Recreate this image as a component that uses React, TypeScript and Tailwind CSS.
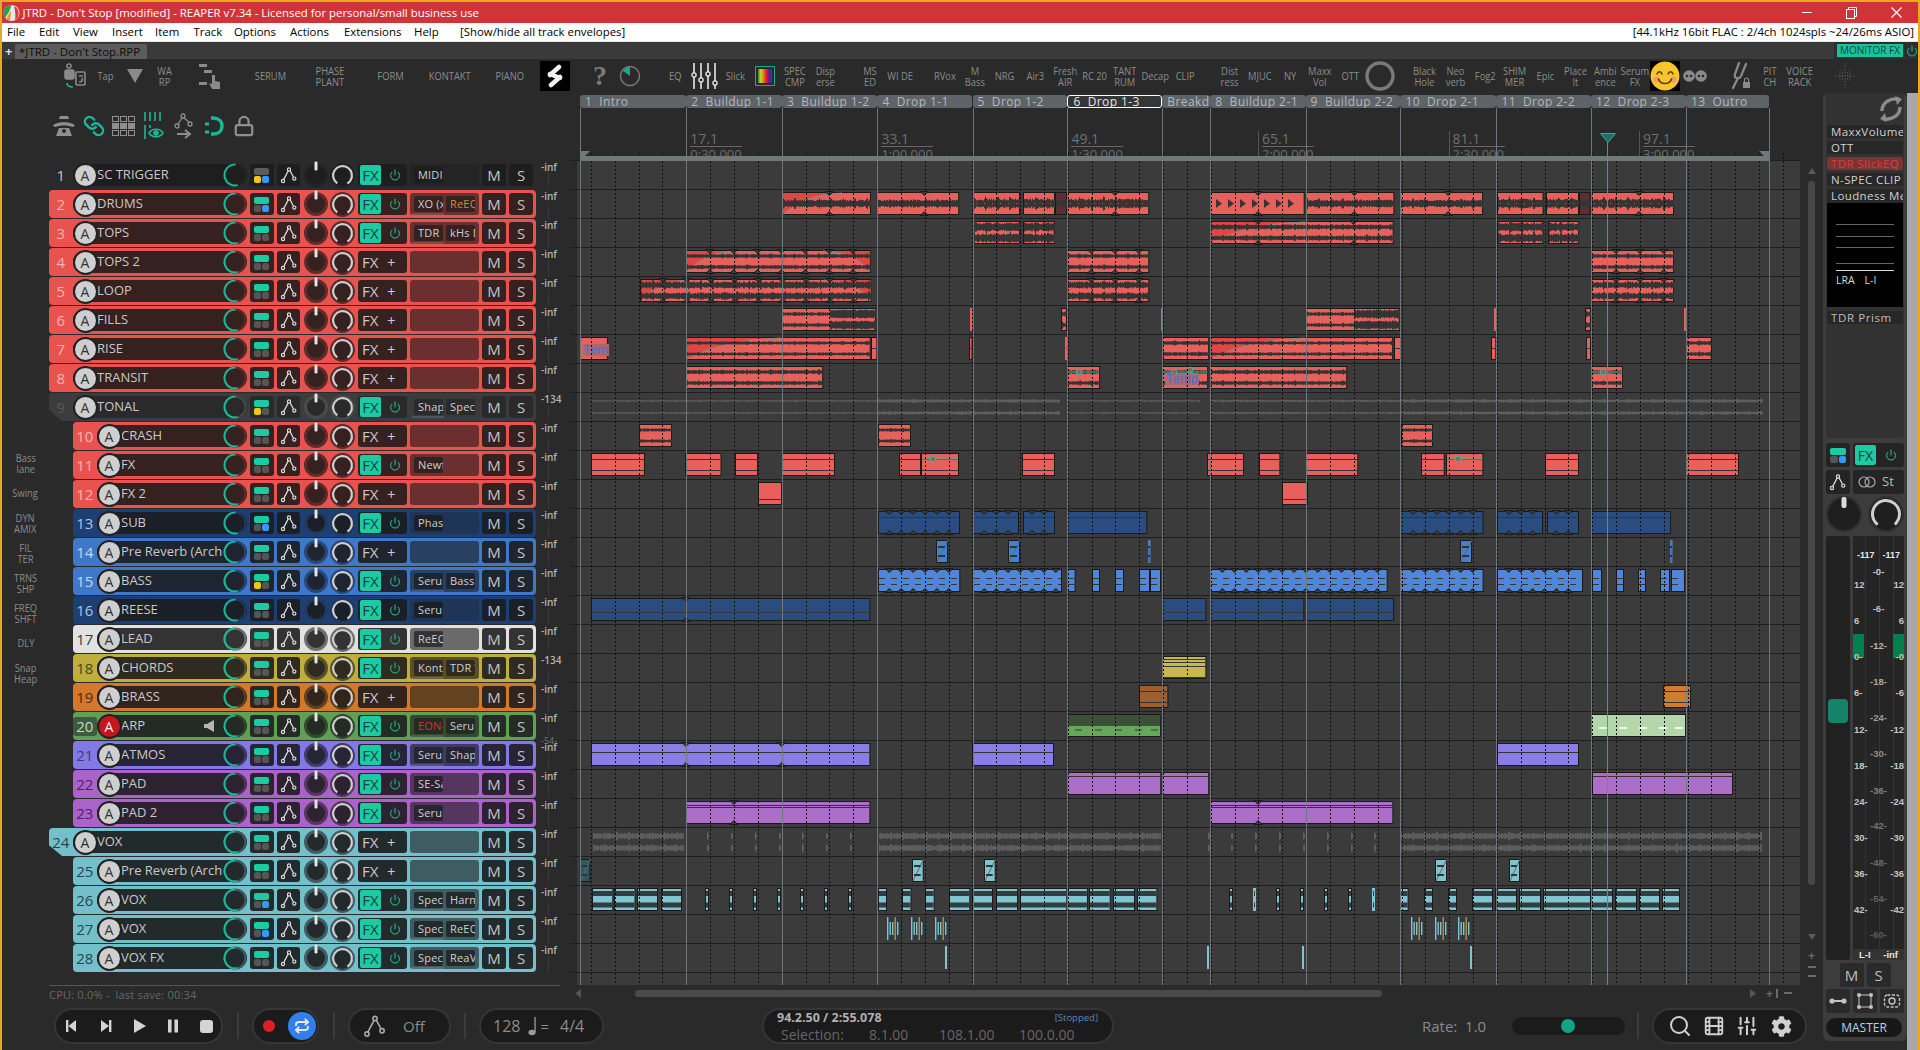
import React from "react";
import { Film, Link, Lock, Power, Repeat, Search, SlidersVertical } from "lucide-react";
import { FaCog } from "react-icons/fa";

type Theme = {
  body: string;
  inner: string;
  ins: string;
  num: string;
  innerHex: string;
  ringHex: string;
};

const themes: Record<string, Theme> = {
  none: { body: "", inner: "bg-[#1e1e1e]", ins: "bg-[#242424]", num: "text-[#c8c8c8]", innerHex: "#1e1e1e", ringHex: "#222222" },
  gray: { body: "bg-[#3c3c3c]", inner: "bg-[#2a2a2a]", ins: "bg-[#3a3a3a]", num: "text-[#5a5a5a]", innerHex: "#2a2a2a", ringHex: "#4a4a4a" },
  red: { body: "bg-[#e8534f]", inner: "bg-[#352120]", ins: "bg-[#6b2f2f]", num: "text-[#f5b5b2]", innerHex: "#352120", ringHex: "#5e2a2a" },
  navy: { body: "bg-[#1d3f72]", inner: "bg-[#1b2028]", ins: "bg-[#1f3558]", num: "text-[#a8c4ea]", innerHex: "#1b2028", ringHex: "#1f3a63" },
  blue: { body: "bg-[#3f78c8]", inner: "bg-[#1e2530]", ins: "bg-[#2a4063]", num: "text-[#c4d8f4]", innerHex: "#1e2530", ringHex: "#28487a" },
  white: { body: "bg-[#e2e2e2]", inner: "bg-[#333333]", ins: "bg-[#6a6a6a]", num: "text-[#3a3a3a]", innerHex: "#333333", ringHex: "#707070" },
  yellow: { body: "bg-[#bfae3d]", inner: "bg-[#2f2b20]", ins: "bg-[#584f25]", num: "text-[#4a4420]", innerHex: "#2f2b20", ringHex: "#5c5228" },
  orange: { body: "bg-[#d4782c]", inner: "bg-[#30241c]", ins: "bg-[#62421f]", num: "text-[#4a2c10]", innerHex: "#30241c", ringHex: "#60401f" },
  green: { body: "bg-[#5fa055]", inner: "bg-[#242b24]", ins: "bg-[#33492c]", num: "text-[#c8d8c0]", innerHex: "#242b24", ringHex: "#33492c" },
  violet: { body: "bg-[#8279e4]", inner: "bg-[#272535]", ins: "bg-[#3f3a64]", num: "text-[#3e3a78]", innerHex: "#272535", ringHex: "#403b68" },
  purple: { body: "bg-[#ac63c9]", inner: "bg-[#2c2230]", ins: "bg-[#55365e]", num: "text-[#4a2360]", innerHex: "#2c2230", ringHex: "#55365e" },
  teal: { body: "bg-[#73bfca]", inner: "bg-[#232a2c]", ins: "bg-[#3f5c62]", num: "text-[#264550]", innerHex: "#232a2c", ringHex: "#3f5c62" },
};

type Track = {
  n: number;
  name: string;
  theme: string;
  indent?: boolean;
  folder?: boolean;
  ins?: string[];
  bl?: string;
  br?: string;
  db?: string;
};

const tracks: Track[] = [
  { n: 1, name: "SC TRIGGER", theme: "none", ins: ["MIDI"], bl: "bg-[#f5c518]", br: "bg-[#3399ff]" },
  { n: 2, name: "DRUMS", theme: "red", ins: ["XO (x64)", "ReEQ"], br: "bg-[#3399ff]" },
  { n: 3, name: "TOPS", theme: "red", ins: ["TDR Nova", "kHs Dyn"] },
  { n: 4, name: "TOPS 2", theme: "red" },
  { n: 5, name: "LOOP", theme: "red" },
  { n: 6, name: "FILLS", theme: "red" },
  { n: 7, name: "RISE", theme: "red" },
  { n: 8, name: "TRANSIT", theme: "red" },
  { n: 9, name: "TONAL", theme: "gray", folder: true, ins: ["Shaper", "Spectral"], bl: "bg-[#f5c518]", db: "-134" },
  { n: 10, name: "CRASH", theme: "red", indent: true },
  { n: 11, name: "FX", theme: "red", indent: true, ins: ["Newfangled"] },
  { n: 12, name: "FX 2", theme: "red", indent: true },
  { n: 13, name: "SUB", theme: "navy", indent: true, ins: ["Phase"], br: "bg-[#3399ff]" },
  { n: 14, name: "Pre Reverb (Archive)", theme: "blue", indent: true },
  { n: 15, name: "BASS", theme: "blue", indent: true, ins: ["Serum", "Bassline"], bl: "bg-[#f5c518]" },
  { n: 16, name: "REESE", theme: "navy", indent: true, ins: ["Serum"] },
  { n: 17, name: "LEAD", theme: "white", indent: true, ins: ["ReEQ"] },
  { n: 18, name: "CHORDS", theme: "yellow", indent: true, ins: ["Kontakt", "TDR V"], db: "-134" },
  { n: 19, name: "BRASS", theme: "orange", indent: true },
  { n: 20, name: "ARP", theme: "green", indent: true, ins: ["EON-X", "Serum"] },
  { n: 21, name: "ATMOS", theme: "violet", indent: true, ins: ["Serum", "Shaper"] },
  { n: 22, name: "PAD", theme: "purple", indent: true, ins: ["SE-Sat"] },
  { n: 23, name: "PAD 2", theme: "purple", indent: true, ins: ["Serum"] },
  { n: 24, name: "VOX", theme: "teal", folder: true },
  { n: 25, name: "Pre Reverb (Archive)", theme: "teal", indent: true },
  { n: 26, name: "VOX", theme: "teal", indent: true, ins: ["Spectral", "Harmony"], br: "bg-[#3399ff]" },
  { n: 27, name: "VOX", theme: "teal", indent: true, ins: ["Spectral", "ReEQ"], br: "bg-[#3399ff]" },
  { n: 28, name: "VOX FX", theme: "teal", indent: true, ins: ["Spectral", "ReaVerb"] },
];

const EnvIcon = ({ size = 18, color = "#dddddd" }: { size?: number; color?: string }) => (
  <svg width={size} height={size} viewBox="0 0 18 18" fill="none" stroke={color} strokeWidth="1.2">
    <path d="M3.6 13.6 L8.4 4.6 M10 4.6 L13.4 11" />
    <circle cx="3" cy="15" r="1.6" />
    <circle cx="9" cy="3.4" r="1.6" />
    <circle cx="14.3" cy="12.6" r="1.6" />
  </svg>
);

const RecArc = ({ ring }: { ring: string }) => (
  <svg width="24" height="24" viewBox="0 0 24 24" fill="none" className="shrink-0">
    <circle cx="12" cy="12" r="10.5" stroke={ring} strokeWidth="2" />
    <circle cx="12" cy="12" r="10.5" stroke="#19b897" strokeWidth="2" strokeDasharray="36 30" transform="rotate(75 12 12)" />
  </svg>
);

const VolKnob = ({ ring, inner }: { ring: string; inner: string }) => (
  <svg width="24" height="24" viewBox="0 0 24 24" className="overflow-visible shrink-0">
    <circle cx="12" cy="12" r="10.5" fill={inner} stroke={ring} strokeWidth="3" />
    <rect x="10.5" y="-1.5" width="3" height="9" rx="1.2" fill="#e4e4e4" />
  </svg>
);

const PanKnob = ({ ring, inner }: { ring: string; inner: string }) => (
  <svg width="25" height="25" viewBox="0 0 25 25" fill="none" className="shrink-0">
    <circle cx="12.5" cy="12.5" r="11.5" fill={inner} stroke={ring} strokeWidth="2" />
    <circle cx="12.5" cy="12.5" r="9.4" stroke="#cfcfcf" strokeWidth="2.2" strokeDasharray="48 11" transform="rotate(124 12.5 12.5)" />
  </svg>
);

const TrackRow = ({ t }: { t: Track }) => {
  const th = themes[t.theme];
  const on = !!t.ins;
  const arm = t.n === 20;
  return (
    <div className="flex h-[29px] shrink-0">
      <div
        className={`flex h-[28px] shrink-0 items-center rounded-[4px] pr-[3px] ${th.body} ${t.indent ? "ml-[24px] w-[463px]" : "w-[487px]"} ${t.folder ? "[clip-path:polygon(0_0,100%_0,100%_100%,13px_100%,0_62%)]" : ""}`}
      >
        <div className={`w-[23.5px] shrink-0 text-center text-[15px] leading-none ${arm ? "rounded-[3px] bg-[#3d5c3d] py-[2px]" : ""} ${th.num}`}>{t.n}</div>
        <div className={`flex h-[22px] min-w-0 flex-1 items-center rounded-full ${th.inner}`}>
          <div className={`relative z-10 flex h-[25px] w-[25px] shrink-0 items-center justify-center rounded-full border-[2.5px] border-[#222] text-[14px] ${arm ? "bg-[#c8141c] text-[#f0f0f0]" : "bg-[#cfcfcf] text-[#333]"}`}>A</div>
          <div className="ml-[-0.5px] min-w-0 flex-1 overflow-hidden whitespace-nowrap text-[13px] text-[#c9c9c9]">{t.name}</div>
          {arm && (
            <svg width="12" height="12" viewBox="0 0 12 12" className="mr-[7px] shrink-0">
              <path d="M0 4 H3 L10 0 V12 L3 8 H0 Z" fill="#b5b5b5" />
            </svg>
          )}
          <RecArc ring={th.ringHex} />
        </div>
        <div className={`ml-[3px] flex h-[22px] w-[23.5px] shrink-0 flex-col items-center justify-center gap-[1px] rounded-[3px] ${th.inner}`}>
          <div className={`h-[7px] w-[15px] rounded-[2px] ${t.theme === "none" ? "bg-[#5c5c5c]" : "bg-[#1ccba4]"}`} />
          <div className="flex gap-[1px]">
            <div className={`h-[7px] w-[7px] rounded-[2px] ${t.bl ?? "bg-[#555]"}`} />
            <div className={`h-[7px] w-[7px] rounded-[2px] ${t.br ?? "bg-[#555]"}`} />
          </div>
        </div>
        <div className={`ml-[3.5px] flex h-[22px] w-[23px] shrink-0 items-center justify-center rounded-[3px] ${th.inner}`}>
          <EnvIcon />
        </div>
        <div className="ml-[4px] shrink-0">
          <VolKnob ring={th.ringHex} inner={th.innerHex} />
        </div>
        <div className="ml-[2px] shrink-0">
          <PanKnob ring={th.ringHex} inner={th.innerHex} />
        </div>
        <div className={`ml-[3px] flex h-[22px] w-[49px] shrink-0 items-center rounded-[3px] ${th.inner}`}>
          {on ? (
            <>
              <div className="ml-[2px] flex h-[20px] w-[21px] items-center justify-center rounded-[2px] bg-[#1ccba4] text-[15px] text-[#16423a]">FX</div>
              <Power size={12} strokeWidth={2} className="ml-[8px] text-[#1ccba4]" />
            </>
          ) : (
            <>
              <div className="ml-[4px] w-[19px] text-[15px] text-[#c9c9c9]">FX</div>
              <div className="ml-[6px] text-[15px] text-[#c9c9c9]">+</div>
            </>
          )}
        </div>
        <div className={`relative ml-[3px] flex h-[22px] w-[69px] shrink-0 items-center gap-[3px] overflow-hidden rounded-[3px] pl-[4px] ${th.ins}`}>
          {t.ins?.map((name) => (
            <div
              key={name}
              className={`h-[16px] w-[29px] shrink-0 overflow-hidden whitespace-nowrap rounded-[2px] pl-[4px] text-[11px] leading-[16px] tracking-[0.2px] ${th.inner} ${name === "ReEQ" && t.n === 2 ? "text-[#d68a3c]" : name.startsWith("EON") ? "text-[#d8322e]" : "text-[#cfcfcf]"}`}
            >
              {name}
            </div>
          ))}
          {t.ins && t.ins.length > 1 && <div className="absolute bottom-0 left-[2px] h-[2px] w-[32px] bg-[#ffffff22]" />}
        </div>
        <div className={`ml-[3px] flex h-[22px] w-[24px] shrink-0 items-center justify-center rounded-[3px] text-[15px] text-[#c4c4c4] ${th.inner}`}>M</div>
        <div className={`ml-[3px] flex h-[22px] w-[24px] shrink-0 items-center justify-center rounded-[3px] text-[15px] text-[#c4c4c4] ${th.inner}`}>S</div>
      </div>
      <div className="relative ml-[5px] w-[28px] shrink-0">
        <div className="text-[10px] leading-[12px] font-semibold text-[#b4b4b4]">{t.db ?? "-inf"}</div>
        <div className="absolute top-[12px] bottom-0 left-[7px] w-px bg-[#383838]" />
        {t.n === 20 && <div className="absolute bottom-[-5px] left-[0px] bg-[#2a2a2a] text-[9px] leading-[10px] text-[#777]">-54-</div>}
      </div>
    </div>
  );
};

/* arrange view */
const X0 = 570;
const Y0 = 93;
const GRID = 23.84;
const regionEdges = [580, 686.3, 782, 877.4, 972.5, 1067.4, 1162.3, 1210.3, 1305.6, 1400.4, 1496.4, 1591, 1686, 1769];
const regions = [
  "1  Intro",
  "2  Buildup 1-1",
  "3  Buildup 1-2",
  "4  Drop 1-1",
  "5  Drop 1-2",
  "6  Drop 1-3",
  "Breakdown",
  "8  Buildup 2-1",
  "9  Buildup 2-2",
  "10  Drop 2-1",
  "11  Drop 2-2",
  "12  Drop 2-3",
  "13  Outro",
];
const marks = [
  { x: 686.3, bar: "17.1", time: "0:30.000" },
  { x: 877.4, bar: "33.1", time: "1:00.000" },
  { x: 1067.4, bar: "49.1", time: "1:30.000" },
  { x: 1258, bar: "65.1", time: "2:00.000" },
  { x: 1448.5, bar: "81.1", time: "2:30.000" },
  { x: 1639, bar: "97.1", time: "3:00.000" },
];

type Clip = {
  r: number;
  a: number;
  b: number;
  w?: string;
  n?: number[];
  ns?: number;
  fi?: number;
  fo?: number;
  col?: string;
  lines?: number[];
  amp?: number;
  swell?: number;
  env?: boolean;
  label?: string;
  dash?: boolean;
};

const rowCol: Record<number, string> = {
  13: "#2b4c7e",
  14: "#4480d2",
  15: "#4f86d8",
  16: "#2b4c7e",
  18: "#c8b84f",
  19: "#9c5f30",
  20: "#65a85a",
  21: "#8a7de6",
  22: "#ab6ec9",
  23: "#ab6ec9",
  25: "#7fc4cf",
  26: "#7fc4cf",
  27: "#7fc4cf",
  28: "#7fc4cf",
};

const clips: Clip[] = [
  // drums
  { r: 2, a: 782, b: 871, w: "m", n: [829.3], fi: 60 },
  { r: 2, a: 877.4, b: 959.7, w: "m", n: [924.7] },
  { r: 2, a: 973, b: 1020, w: "d" },
  { r: 2, a: 1023, b: 1055, w: "d" },
  { r: 2, a: 1055, b: 1067, w: "m", col: "#5a2f2f" },
  { r: 2, a: 1067.4, b: 1149.7, w: "d", n: [1115.4] },
  { r: 2, a: 1210.3, b: 1305, w: "a", n: [1258.4] },
  { r: 2, a: 1305.6, b: 1394, w: "m", n: [1353.8] },
  { r: 2, a: 1400.4, b: 1483.5, w: "m", n: [1448.5] },
  { r: 2, a: 1496.5, b: 1543, w: "d" },
  { r: 2, a: 1546, b: 1579, w: "d" },
  { r: 2, a: 1579, b: 1590.5, w: "m", col: "#5a2f2f" },
  { r: 2, a: 1591, b: 1674, w: "d", n: [1639] },
  // tops
  { r: 3, a: 973, b: 1020, w: "s", amp: 4.5 },
  { r: 3, a: 1023, b: 1054.6, w: "s", amp: 4.5 },
  { r: 3, a: 1210.3, b: 1394, w: "s", n: [1258.4, 1353.8], fi: 95, amp: 2.5 },
  { r: 3, a: 1496.5, b: 1543, w: "s", amp: 4.5 },
  { r: 3, a: 1548, b: 1579, w: "s", amp: 4.5 },
  // tops 2, loop
  { r: 4, a: 686.3, b: 871, w: "s", ns: GRID, fi: 48, fo: 48, amp: 2 },
  { r: 4, a: 1067.4, b: 1149.7, w: "s", ns: GRID, amp: 2 },
  { r: 4, a: 1591, b: 1674, w: "s", ns: GRID, amp: 2 },
  { r: 5, a: 639.5, b: 871, w: "s", ns: GRID, fi: 48, fo: 48, amp: 3.5 },
  { r: 5, a: 1067.4, b: 1149.7, w: "s", ns: GRID, amp: 3.5 },
  { r: 5, a: 1591, b: 1674, w: "s", ns: GRID, amp: 3.5 },
  // fills
  { r: 6, a: 782, b: 876, w: "s", swell: 47, amp: 1.8 },
  { r: 6, a: 970, b: 972.5, col: "#e8605c" },
  { r: 6, a: 1061, b: 1067, w: "s" },
  { r: 6, a: 1160.5, b: 1162.3, col: "#e8605c" },
  { r: 6, a: 1305.6, b: 1399.5, w: "s", swell: 47, amp: 1.8 },
  { r: 6, a: 1493.6, b: 1496.3, col: "#e8605c" },
  { r: 6, a: 1585, b: 1591, w: "s" },
  { r: 6, a: 1684, b: 1686, col: "#e8605c" },
  // rise
  { r: 7, a: 579.6, b: 607.5, label: "Tem" },
  { r: 7, a: 686.3, b: 871, w: "s", fi: 95, amp: 1.6 },
  { r: 7, a: 871, b: 877.4, w: "l" },
  { r: 7, a: 969, b: 972.5, w: "l" },
  { r: 7, a: 1064.5, b: 1067.4, w: "l" },
  { r: 7, a: 1162.3, b: 1209.5, w: "s", amp: 2 },
  { r: 7, a: 1210.3, b: 1393.5, w: "s", fi: 95, amp: 1.6 },
  { r: 7, a: 1394, b: 1401, w: "l" },
  { r: 7, a: 1491, b: 1496.3, w: "l" },
  { r: 7, a: 1586, b: 1591, w: "l" },
  { r: 7, a: 1686, b: 1712, w: "s", amp: 2 },
  // transit
  { r: 8, a: 686.3, b: 823.5, w: "s", amp: 2 },
  { r: 8, a: 1067.4, b: 1100.5, w: "s", env: true, amp: 2 },
  { r: 8, a: 1162.3, b: 1208.5, w: "s", env: true, label: "Tempo", amp: 2 },
  { r: 8, a: 1210.3, b: 1347.5, w: "s", amp: 2 },
  { r: 8, a: 1591, b: 1623, w: "s", env: true, amp: 2 },
  // tonal ghost
  { r: 9, a: 591, b: 877, w: "g", amp: 0.8 },
  { r: 9, a: 877, b: 1060, w: "g", amp: 1.6 },
  { r: 9, a: 1067, b: 1200, w: "g", amp: 0.8 },
  { r: 9, a: 1210, b: 1400, w: "g", amp: 1 },
  { r: 9, a: 1400, b: 1763, w: "g", amp: 1.6 },
  // crash
  { r: 10, a: 639.3, b: 672.3, w: "s", amp: 1.6 },
  { r: 10, a: 877.7, b: 910.7, w: "s", amp: 1.6 },
  { r: 10, a: 1401, b: 1433, w: "s", amp: 1.6 },
  // fx
  ...[
    [591, 645],
    [684.5, 721],
    [735, 758],
    [782, 835],
    [899, 921],
    [921, 959],
    [1022, 1055],
    [1207.3, 1244.3],
    [1258.6, 1280],
    [1305.7, 1358],
    [1421.3, 1445],
    [1445.6, 1483],
    [1545, 1579],
    [1686, 1739],
  ].map(([a, b]) => ({ r: 11, a, b, w: "l", lines: [6, 17], env: a === 921 || a === 1445.6 })),
  { r: 12, a: 758, b: 782, w: "l", lines: [17] },
  { r: 12, a: 1281.7, b: 1307.7, w: "l", lines: [17] },
  // sub
  { r: 13, a: 877.7, b: 959.7, w: "l", lines: [6], ns: GRID / 2 },
  { r: 13, a: 973, b: 1019, w: "l", lines: [6], ns: GRID / 2 },
  { r: 13, a: 1023, b: 1055, w: "l", lines: [6], ns: GRID / 2 },
  { r: 13, a: 1067.4, b: 1147.7, w: "l", lines: [6] },
  { r: 13, a: 1400.4, b: 1484, w: "l", lines: [6], ns: GRID / 2 },
  { r: 13, a: 1497, b: 1543, w: "l", lines: [6], ns: GRID / 2 },
  { r: 13, a: 1547, b: 1579, w: "l", lines: [6], ns: GRID / 2 },
  { r: 13, a: 1591, b: 1671, w: "l", lines: [6] },
  // pre reverb
  ...[936, 1008, 1147.5, 1460, 1670].map((a) => ({ r: 14, a, b: a + (a === 1147.5 || a === 1670 ? 2.5 : 12), w: "z" })),
  // bass
  ...[
    [877.7, 960],
    [973, 1062],
    [1067.4, 1076],
    [1092, 1100],
    [1115, 1124],
    [1139, 1150],
    [1150, 1161],
    [1210.3, 1388],
    [1400.4, 1484],
    [1497, 1583],
    [1592, 1602],
    [1616, 1624],
    [1638, 1646],
    [1660, 1670],
    [1671, 1685],
  ].map(([a, b]) => ({ r: 15, a, b, w: "l", lines: [9, 15], ns: b - a > 30 ? GRID / 2 : 0, dash: true })),
  // reese
  { r: 16, a: 591.3, b: 870.7, w: "l", lines: [14], n: [686.3] },
  { r: 16, a: 1162.3, b: 1206.7, w: "l", lines: [14] },
  { r: 16, a: 1210.3, b: 1304.7, w: "l", lines: [14] },
  { r: 16, a: 1305.6, b: 1393.7, w: "l", lines: [14] },
  // chords, brass
  { r: 18, a: 1162.3, b: 1206.7, w: "l", lines: [3, 6, 10, 21] },
  { r: 19, a: 1139.3, b: 1168.7, w: "l", lines: [6, 17] },
  { r: 19, a: 1663, b: 1691, w: "l", lines: [6, 17], col: "#cc7d30" },
  // arp
  { r: 20, a: 1067.4, b: 1161.5, w: "arp" },
  { r: 20, a: 1591, b: 1686, w: "arp2" },
  // atmos
  { r: 21, a: 591.3, b: 870.7, w: "l", lines: [9], n: [686.3, 782] },
  { r: 21, a: 972.4, b: 1054.4, w: "l", lines: [9] },
  { r: 21, a: 1497, b: 1579, w: "l", lines: [9] },
  // pads
  { r: 22, a: 1067.4, b: 1161.7, w: "l", lines: [4] },
  { r: 22, a: 1162.3, b: 1209.5, w: "l", lines: [4] },
  { r: 22, a: 1592, b: 1733, w: "l", lines: [4] },
  { r: 23, a: 686.3, b: 870.7, w: "l", lines: [4, 6], n: [734.2] },
  { r: 23, a: 1210.3, b: 1393.7, w: "l", lines: [4, 6], n: [1258.4] },
  // vox ghost
  { r: 24, a: 591.7, b: 683, w: "g", amp: 3.2 },
  ...[706, 730, 754, 778, 801, 825, 849].map((a) => ({ r: 24, a, b: a + 3, w: "g", amp: 3.2 })),
  { r: 24, a: 877.7, b: 1160, w: "g", amp: 3.2 },
  ...[1207, 1230, 1254, 1278, 1302, 1326, 1350, 1373].map((a) => ({ r: 24, a, b: a + 3, w: "g", amp: 3.2 })),
  { r: 24, a: 1400.4, b: 1762, w: "g", amp: 3.2 },
  // vox pre reverb
  { r: 25, a: 579.6, b: 590, w: "z", col: "#2f5a64" },
  { r: 25, a: 912.3, b: 924, w: "z" },
  { r: 25, a: 984, b: 995.7, w: "z" },
  { r: 25, a: 1435, b: 1447, w: "z" },
  { r: 25, a: 1509, b: 1520, w: "z" },
  // vox
  ...[
    [591.7, 613],
    [613.5, 635],
    [637, 658],
    [661, 682],
    [705, 709],
    [729, 733],
    [753, 757],
    [777, 781],
    [800, 804],
    [824, 828],
    [848, 852],
    [877.7, 886.7],
    [901.5, 911],
    [925, 934.7],
    [948.7, 970],
    [972, 993],
    [996, 1018],
    [1019.7, 1067],
    [1067.4, 1088.3],
    [1089.3, 1111],
    [1113, 1135],
    [1137.3, 1157.7],
    [1229, 1233],
    [1253, 1256],
    [1276, 1280],
    [1300, 1304],
    [1324, 1328],
    [1348, 1352],
    [1372, 1375],
    [1400.4, 1409],
    [1424, 1433],
    [1448, 1457],
    [1472, 1493],
    [1495, 1517],
    [1519, 1541],
    [1543, 1591],
    [1591, 1613],
    [1615, 1637],
    [1639, 1660],
    [1662, 1680],
  ].map(([a, b]) => ({ r: 26, a, b, w: "band" })),
  // vox chops
  ...[
    [887, 901.7],
    [911, 925],
    [935, 948],
    [1410.7, 1424],
    [1435, 1448.3],
    [1457.7, 1472],
  ].map(([a, b]) => ({ r: 27, a, b, w: "busy" })),
  // vox fx
  ...[945, 1207, 1302.3, 1470].map((a) => ({ r: 28, a, b: a + 2, col: "#7fc4cf" })),
];

const makeBars = (seed: number, W: number, cy: number, amp: number, swell?: number) => {
  let r = seed % 233280;
  const rnd = () => {
    r = (r * 9301 + 49297) % 233280;
    return r / 233280;
  };
  let d = "";
  for (let x = 1; x < W; x += 1) {
    let a = amp * (0.6 + 0.4 * rnd());
    if (x % 12 < 2) a *= 1.4;
    if (swell !== undefined && x > swell) a = Math.min(4.5, amp * 2.6) * (0.7 + 0.3 * rnd());
    d += `M${x + 0.5} ${(cy - a).toFixed(1)}V${(cy + a).toFixed(1)}`;
  }
  return d;
};

const ClipView = ({ c, i }: { c: Clip; i: number }) => {
  const W = c.b - c.a;
  const H = 23;
  const top = 189 + (c.r - 2) * 29 + 3 - Y0;
  const col = c.col ?? rowCol[c.r] ?? "#e8605c";
  const isGhost = c.w === "g";
  const stroke = "#1a1a1a";
  let nts: number[] = (c.n ?? []).map((v) => v - c.a);
  if (c.ns) {
    nts = [];
    const first = Math.ceil((c.a + 3 - 686.3) / c.ns);
    for (let k = first; 686.3 + k * c.ns < c.b - 3; k += 1) nts.push(686.3 + k * c.ns - c.a);
  }
  const wave = "#353535";
  return (
    <div className="absolute overflow-visible" style={{ left: c.a - X0, top, width: W, height: H }}>
      <svg width={W} height={H + 2} viewBox={`0 0 ${W} ${H + 2}`} className="absolute top-0 left-0 overflow-visible">
        {!isGhost && W > 3 && <rect x="0.5" y="0.5" width={W - 1} height={H - 1} fill={col} stroke={stroke} />}
        {!isGhost && W <= 3 && <rect x="0" y="0" width={W} height={H} fill={col} />}
        {c.fi !== undefined && c.fi > 0 && (
          <>
            <path d={`M1 1H${c.fi}Q${c.fi * 0.4} 2 1 ${H - 1}Z`} fill="#df4644" />
            <path d={`M${c.fi} 1Q${c.fi * 0.4} 2 1 ${H - 1}`} fill="none" stroke="#8a8a8a" />
          </>
        )}
        {c.fo !== undefined && (
          <>
            <path d={`M${W - 1} 1H${W - c.fo}Q${W - c.fo * 0.3} 2 ${W - 1} ${H - 1}Z`} fill="#df4644" />
            <path d={`M${W - c.fo} 1Q${W - c.fo * 0.3} 2 ${W - 1} ${H - 1}`} fill="none" stroke="#8a8a8a" />
          </>
        )}
        {c.w === "m" && <path d={makeBars(i * 37 + 11, W, 11.5, 4)} stroke={wave} />}
        {c.w === "d" && (
          <>
            <path d={makeBars(i * 37 + 11, W, 11.5, 5)} stroke={wave} />
            <path d={`M3 11.5H${W - 3}`} stroke="#b95450" strokeDasharray="1 7" />
          </>
        )}
        {c.w === "a" &&
          Array.from({ length: Math.floor((W - 6) / 12) }, (_, k) => (
            <path key={k} d={`M${6 + k * 12} 7 l6 4.5 l-6 4.5Z`} fill={wave} />
          ))}
        {c.w === "s" && (
          <>
            <path d={`M0 6H${W}M0 17H${W}`} stroke={wave} />
            <path d={makeBars(i * 37 + 11, W, 6, c.amp ?? 2.5, c.swell)} stroke={wave} />
            <path d={makeBars(i * 41 + 7, W, 17, c.amp ?? 2.5, c.swell)} stroke={wave} />
          </>
        )}
        {c.w === "l" &&
          (c.lines ?? [11]).map((y) => (
            <path key={y} d={`M1 ${y + 0.5}H${W - 1}`} stroke={wave} strokeDasharray={c.dash ? "6 6" : undefined} />
          ))}
        {isGhost && (
          <>
            <path d={makeBars(i * 37 + 11, W, 6, c.amp ?? 2)} stroke="#5e5e5e" />
            <path d={makeBars(i * 41 + 7, W, 18, c.amp ?? 2)} stroke="#5e5e5e" />
          </>
        )}
        {c.w === "band" && (
          <>
            <rect x="1" y="3" width={Math.max(W - 2, 0)} height="5" fill="#333d3f" />
            <rect x="1" y="14.5" width={Math.max(W - 2, 0)} height="5" fill="#333d3f" />
          </>
        )}
        {c.w === "busy" && (
          <>
            <rect x="0" y="0" width={W} height={H} fill="#2f3b3e" />
            {Array.from({ length: Math.floor(W / 2.5) }, (_, k) => (
              <rect key={k} x={k * 2.5} y={k % 3 === 0 ? 0 : 5} width="1.4" height={k % 3 === 0 ? H : 13} fill={k % 7 === 3 ? "#c88a3c" : "#7fc4cf"} />
            ))}
          </>
        )}
        {c.w === "z" && (
          <>
            <path d={`M1 ${H - 1} L${W} 0`} stroke="#666" />
            <path d={`M2 7H${W - 3}M2 16H${W - 3}`} stroke="#333" strokeWidth="2" />
          </>
        )}
        {c.w === "arp" && (
          <>
            <rect x="1" y="1" width={W - 2} height="11" fill="#3c5038" />
            {[8, 28, 48, 68, 84].map((v) => (
              <path key={v} d={`M${v} 16h7`} stroke="#2c4028" />
            ))}
          </>
        )}
        {c.w === "arp2" && (
          <>
            <rect x="1" y="1" width={W - 2} height={H - 2} fill="#b4d6ab" />
            {[8, 28, 48, 68, 84].map((v) => (
              <path key={v} d={`M${v} 14h8`} stroke="#f2f8ef" strokeWidth="2" />
            ))}
          </>
        )}
        {nts.map((v) => (
          <g key={v} fill="#3b3b3b" stroke={stroke}>
            <path d={`M${v - 4} -0.5 L${v} 3.5 L${v + 4} -0.5Z`} />
            <path d={`M${v - 4} ${H + 0.5} L${v} ${H - 3.5} L${v + 4} ${H + 0.5}Z`} />
          </g>
        ))}
        {c.env && (
          <g stroke="#1ccba4" fill="#a05a5a">
            <path d={`M1 6H${W - 1}`} fill="none" />
            <circle cx="12" cy="6" r="2.8" />
            {W > 40 && <circle cx="28" cy="4" r="2.8" />}
          </g>
        )}
      </svg>
      {c.label && (
        <div className="absolute top-[7px] left-[3px] h-[12px] max-w-[34px] overflow-hidden bg-[#a56a72] px-[1px] text-[12px] leading-[12px] text-[#4a6fd8]">{c.label}</div>
      )}
    </div>
  );
};

const gridXs: number[] = [];
for (let k = -4; k < 47; k += 1) {
  const x = 686.3 + k * GRID;
  if (x > 582 && x < 1799) gridXs.push(x);
}
const laneSeps = Array.from({ length: 29 }, (_, k) => 160 + k * 29);

const Arrange = () => (
  <div className="relative h-full w-[1230px] shrink-0 overflow-hidden">
    <div className="absolute top-[68px] right-0 bottom-0 left-[7px] bg-[#3b3b3b]" />
    {laneSeps.map((y) => (
      <div key={y} className="absolute right-0 left-0 h-px bg-[#1e1e1e]" style={{ top: y - Y0 }} />
    ))}
    {clips.map((c, i) => (
      <ClipView key={i} c={c} i={i} />
    ))}
    {gridXs.map((x) => (
      <div
        key={x}
        className="absolute top-[60px] bottom-0 w-px bg-[repeating-linear-gradient(180deg,#101010_0px,#101010_2px,transparent_2px,transparent_4px)]"
        style={{ left: x - X0 }}
      />
    ))}
    {marks.map((m) => (
      <div key={m.bar} className="absolute top-[38px] h-[25px] w-[56px] border-l border-[#555] pl-[3px] text-[#6f6f6f]" style={{ left: m.x - X0 }}>
        <div className="border-b border-[#666] text-[14px] leading-[15px]">{m.bar}</div>
        <div className="text-[13px] leading-[15px]">{m.time}</div>
      </div>
    ))}
    {regionEdges.map((x) => (
      <div key={x} className="absolute top-[15px] bottom-0 w-px bg-[#70767c]" style={{ left: x - X0 }} />
    ))}
    <div className="absolute top-[63px] left-[10px] h-[5px] w-[1189px] bg-[#70787a]" />
    <svg width="10" height="10" viewBox="0 0 10 10" className="absolute top-[58px] left-[10px]">
      <path d="M0 0H10L0 10Z" fill="#70787a" />
    </svg>
    <svg width="10" height="10" viewBox="0 0 10 10" className="absolute top-[58px] left-[1189px]">
      <path d="M0 0H10V10Z" fill="#70787a" />
    </svg>
    {regions.map((name, i) => {
      const sel = i === 5;
      return (
        <div
          key={name}
          className={`absolute top-[2px] h-[13px] overflow-hidden rounded-[3px] pl-[5px] text-[12px] tracking-[0.4px] whitespace-pre ${sel ? "border border-white bg-[#343638] leading-[12px] text-[#e8e8e8]" : "bg-[#5e6368] leading-[14px] text-[#b4b8bc]"}`}
          style={{ left: regionEdges[i] - X0, width: regionEdges[i + 1] - regionEdges[i] }}
        >
          {name}
        </div>
      );
    })}
    <div className="absolute top-[49px] bottom-0 left-[1037px] w-px bg-[#2aa596]" />
    <svg width="16" height="10" viewBox="0 0 16 10" className="absolute top-[40px] left-[1029.5px]">
      <path d="M0.5 0.5H15.5L8 9.5Z" fill="#1f6f64" stroke="#3aa898" />
    </svg>
  </div>
);

/* toolbars */
const Lbl = ({ a, b }: { a: string; b?: string }) => (
  <div className="scale-x-[0.85] text-center text-[11px] leading-[11.5px] whitespace-nowrap text-[#8c8c8c]">
    <div>{a}</div>
    {b && <div>{b}</div>}
  </div>
);

type TopItem = { w: number; a?: string; b?: string; icon?: React.ReactNode };

const topItems: TopItem[] = [
  {
    w: 30,
    icon: (
      <svg width="26" height="28" viewBox="0 0 26 28" fill="none" stroke="#8a8a8a" strokeWidth="1.6">
        <circle cx="7" cy="4" r="2" />
        <rect x="3" y="8" width="9" height="9" rx="2" fill="#8a8a8a" />
        <rect x="14" y="10" width="9" height="13" rx="1" />
        <path d="M17 14h4M17 20c3 0 4-2 3-4" />
        <path d="M5 21c0 3 3 4 6 4" stroke="#19b897" />
      </svg>
    ),
  },
  { w: 30, a: "Tap" },
  {
    w: 30,
    icon: (
      <svg width="16" height="16" viewBox="0 0 16 16">
        <path d="M0 1H16L8 15Z" fill="#8a8a8a" />
      </svg>
    ),
  },
  { w: 30, a: "WA", b: "RP" },
  {
    w: 60,
    icon: (
      <svg width="24" height="26" viewBox="0 0 24 26" fill="#8a8a8a">
        <rect x="1" y="1" width="8" height="3" />
        <rect x="6" y="7" width="8" height="3" />
        <rect x="1" y="19" width="8" height="3" />
        <path d="M14 12h3v6l5 1v7h-8l-3-6 3 1z" />
      </svg>
    ),
  },
  { w: 60, a: "SERUM" },
  { w: 60, a: "PHASE", b: "PLANT" },
  { w: 60, a: "FORM" },
  { w: 60, a: "KONTAKT" },
  { w: 60, a: "PIANO" },
  {
    w: 30,
    icon: (
      <div className="flex h-[30px] w-[30px] items-center justify-center bg-black">
        <svg width="16" height="24" viewBox="0 0 16 24" fill="none" stroke="#f0f0f0" strokeWidth="4.5" strokeLinecap="round">
          <path d="M12 3 L3 11" />
          <path d="M13 13 L4 21" />
          <path d="M3 10 L13 14" />
        </svg>
      </div>
    ),
  },
  { w: 15 },
  { w: 30, icon: <div className="font-['Liberation_Serif'] text-[28px] font-bold text-[#7a7a7a]">?</div> },
  {
    w: 30,
    icon: (
      <svg width="22" height="24" viewBox="0 0 22 24" fill="none">
        <circle cx="11" cy="12" r="9.5" stroke="#777" strokeWidth="1.5" />
        <path d="M11 12 V3 A9 9 0 0 0 4 7 Z" fill="#19a88a" />
      </svg>
    ),
  },
  { w: 15 },
  { w: 30, a: "EQ" },
  {
    w: 30,
    icon: (
      <svg width="28" height="28" viewBox="0 0 28 28" fill="none" stroke="#e8e8e8" strokeWidth="1.3">
        {[3, 10, 17, 24].map((x, i) => (
          <g key={x}>
            <path d={`M${x} 1V27`} strokeWidth="1.6" />
            <circle cx={x} cy={[13, 18, 12, 21][i]} r="2.1" fill="#2a2a2a" />
          </g>
        ))}
      </svg>
    ),
  },
  { w: 30, a: "Slick" },
  {
    w: 30,
    icon: (
      <div className="h-[20px] w-[20px] border border-[#1aa98a] p-[2px]">
        <div className="h-full w-full bg-[linear-gradient(90deg,#1f8f3a,#d8d020,#e07820,#d82020,#5a1a90,#2040c0)]" />
      </div>
    ),
  },
  { w: 30, a: "SPEC", b: "CMP" },
  { w: 30, a: "Disp", b: "erse" },
  { w: 15 },
  { w: 30, a: "MS", b: "ED" },
  { w: 30, a: "WI DE" },
  { w: 15 },
  { w: 30, a: "RVox" },
  { w: 30, a: "M", b: "Bass" },
  { w: 30, a: "NRG" },
  { w: 30, a: "Air3" },
  { w: 30, a: "Fresh", b: "AIR" },
  { w: 30, a: "RC 20" },
  { w: 30, a: "TANT", b: "RUM" },
  { w: 30, a: "Decap" },
  { w: 30, a: "CLIP" },
  { w: 15 },
  { w: 30, a: "Dist", b: "ress" },
  { w: 30, a: "MJUC" },
  { w: 30, a: "NY" },
  { w: 30, a: "Maxx", b: "Vol" },
  { w: 30, a: "OTT" },
  {
    w: 30,
    icon: (
      <svg width="30" height="30" viewBox="0 0 30 30" fill="none">
        <circle cx="15" cy="15" r="13" stroke="#7a7a7a" strokeWidth="3.4" />
      </svg>
    ),
  },
  { w: 15 },
  { w: 30, a: "Black", b: "Hole" },
  { w: 30, a: "Neo", b: "verb" },
  { w: 30, a: "Fog2" },
  { w: 30, a: "SHIM", b: "MER" },
  { w: 30, a: "Epic" },
  { w: 30, a: "Place", b: "It" },
  { w: 30, a: "Ambi", b: "ence" },
  { w: 30, a: "Serum", b: "FX" },
  {
    w: 30,
    icon: (
      <div className="h-[30px] w-[30px] bg-black">
        <svg width="30" height="30" viewBox="0 0 30 30">
          <circle cx="15" cy="15" r="14.5" fill="#f7c52c" />
          <circle cx="6.5" cy="18.5" r="3" fill="#f39a6a" />
          <circle cx="23.5" cy="18.5" r="3" fill="#f39a6a" />
          <path d="M7 13c1-3 4-3 5 0M18 13c1-3 4-3 5 0" fill="none" stroke="#5a3a12" strokeWidth="1.5" strokeLinecap="round" />
          <path d="M8.5 18c2 6 11 6 13 0" fill="none" stroke="#5a3a12" strokeWidth="1.6" strokeLinecap="round" />
        </svg>
      </div>
    ),
  },
  {
    w: 30,
    icon: (
      <svg width="24" height="14" viewBox="0 0 24 14">
        <circle cx="6" cy="7" r="5.8" fill="#8a8a8a" />
        <circle cx="18" cy="7" r="5.8" fill="#8a8a8a" />
        {[4, 8].map((x) => (
          <circle key={x} cx={x} cy="7" r="1.3" fill="#2a2a2a" />
        ))}
        {[16, 20].map((x) => (
          <circle key={x} cx={x} cy="7" r="1.3" fill="#2a2a2a" />
        ))}
      </svg>
    ),
  },
  { w: 15 },
  {
    w: 30,
    icon: (
      <svg width="24" height="28" viewBox="0 0 24 28" fill="none" stroke="#8a8a8a" strokeWidth="2.2" strokeLinecap="round">
        <path d="M11 1 L7 12 M18 2 L13 14 C11 18 6 17 7 12 M10 16 L5 26" />
        <rect x="15" y="20" width="7" height="6" fill="#8a8a8a" stroke="none" />
        <path d="M16.5 20v-2a2 2 0 0 1 4 0v2" strokeWidth="1.2" />
      </svg>
    ),
  },
  { w: 30, a: "PIT", b: "CH" },
  { w: 30, a: "VOICE", b: "RACK" },
  { w: 15 },
  {
    w: 30,
    icon: (
      <svg width="22" height="28" viewBox="0 0 22 28" stroke="#555" strokeDasharray="1.5 1.5">
        <path d="M11 1V27M6 8V20M16 8V20M1 14H21M8.5 10V18M13.5 10V18" />
      </svg>
    ),
  },
];

const TopToolbar = () => (
  <div className="flex h-[34px] shrink-0 items-center pl-[58px]">
    {topItems.map((it, i) => (
      <div key={i} className="flex h-[30px] shrink-0 items-center justify-center" style={{ width: it.w }}>
        {it.icon ?? (it.a ? <Lbl a={it.a} b={it.b} /> : null)}
      </div>
    ))}
  </div>
);

const TcpTools = () => (
  <div className="mt-[17px] flex h-[32px] items-center">
    <div className="flex w-[30px] justify-center">
      <svg width="24" height="22" viewBox="0 0 24 22" fill="#8f8f8f">
        <path d="M8 1h8l1 3H7z" />
        <path d="M1 11c2-5 20-5 22 0l-3 1c-3-2-13-2-16 0z" />
        <path d="M7 13h10l3 8H4z" />
        <circle cx="12" cy="16" r="2" fill="#2a2a2a" />
      </svg>
    </div>
    <div className="flex w-[30px] justify-center">
      <Link size={22} strokeWidth={2.6} className="-scale-x-100 text-[#19b897]" />
    </div>
    <div className="flex w-[30px] justify-center">
      <svg width="24" height="20" viewBox="0 0 24 20" fill="none" stroke="#8f8f8f">
        {[0.5, 8.5, 16.5].map((x) => (
          <g key={x}>
            <rect x={x} y="0.5" width="6" height="5" />
            <rect x={x} y="7.5" width="6" height="5" fill="#8f8f8f" />
            <rect x={x} y="14.5" width="6" height="5" />
          </g>
        ))}
      </svg>
    </div>
    <div className="flex w-[30px] justify-center">
      <svg width="22" height="28" viewBox="0 0 22 28" fill="none" stroke="#19b897" strokeWidth="1.6">
        {[2, 7, 12, 17].map((x) => (
          <path key={x} d={`M${x} 0V9`} />
        ))}
        <path d="M2 13V27M7 13V16" />
        <path d="M6 21c3-5 11-5 14 0c-3 5-11 5-14 0z" />
        <circle cx="13" cy="21" r="2" fill="#19b897" />
      </svg>
    </div>
    <div className="flex w-[30px] justify-center">
      <svg width="20" height="26" viewBox="0 0 20 26" fill="none" stroke="#8f8f8f" strokeWidth="1.3">
        <circle cx="9" cy="3" r="2" />
        <circle cx="3" cy="13" r="2" />
        <circle cx="16" cy="11" r="2" />
        <path d="M4 11L8 5M10 5L15 9" />
        <path d="M3 21H14M11 17L16 21L11 25" strokeWidth="2" />
      </svg>
    </div>
    <div className="flex w-[30px] justify-center">
      <svg width="20" height="20" viewBox="0 0 20 20" fill="none" stroke="#19b897" strokeWidth="3.4">
        <path d="M7 2h2c5 0 9 3 9 8s-4 8-9 8H7" />
        <path d="M1 8h4M1 16h4" strokeWidth="3" />
      </svg>
    </div>
    <div className="flex w-[30px] justify-center">
      <Lock size={22} strokeWidth={2.4} className="text-[#8f8f8f]" />
    </div>
  </div>
);

const sideLabels: [string, string?][] = [
  ["Bass", "lane"],
  ["Swing"],
  ["DYN", "AMIX"],
  ["FIL", "TER"],
  ["TRNS", "SHP"],
  ["FREQ", "SHFT"],
  ["DLY"],
  ["Snap", "Heap"],
];

const Tcp = () => (
  <div className="flex h-full w-[568px] shrink-0">
    <div className="w-[47px] shrink-0 pt-[355px]">
      {sideLabels.map(([a, b]) => (
        <div key={a} className="flex h-[30px] items-center justify-center">
          <Lbl a={a} b={b} />
        </div>
      ))}
    </div>
    <div className="flex min-w-0 flex-1 flex-col">
      <TcpTools />
      <div className="mt-[19px] flex flex-col">
        {tracks.map((t) => (
          <TrackRow key={t.n} t={t} />
        ))}
      </div>
    </div>
  </div>
);

const VScroll = () => (
  <div className="flex w-[23px] shrink-0 flex-col items-center pt-[75px]">
    <svg width="8" height="6" viewBox="0 0 8 6">
      <path d="M4 0L8 6H0Z" fill="#5a5a5a" />
    </svg>
    <div className="mt-[7px] h-[704px] w-[7px] rounded-full bg-[#474747]" />
    <svg width="8" height="6" viewBox="0 0 8 6" className="mt-[49px]">
      <path d="M4 6L8 0H0Z" fill="#5a5a5a" />
    </svg>
    <div className="mt-[11px] text-[12px] leading-[10px] font-bold text-[#6a6a6a]">+</div>
    <div className="mt-[5px] h-[2px] w-[8px] bg-[#6a6a6a]" />
    <div className="mt-[7px] h-[2px] w-[8px] bg-[#6a6a6a]" />
  </div>
);

const Divider = ({ ml }: { ml: string }) => <div className={`h-[26px] w-[2px] bg-[#3c3c3c] ${ml}`} />;
const pill = "flex h-[36px] shrink-0 items-center rounded-full border-2 border-[#353535] bg-[#1b1b1b]";

const BottomBar = () => (
  <div className="h-[65px] shrink-0">
    <div className="flex h-[23px] items-start">
      <div className="ml-[47px] w-[511px] border-t border-[#555] pt-[1px] text-[11px] leading-[15px] tracking-[0.2px] text-[#686868]">
        CPU: 0.0% -&nbsp; last save: 00:34
      </div>
      <svg width="6" height="9" viewBox="0 0 6 9" className="mt-[4px] ml-[15px]">
        <path d="M6 0V9L0 4.5Z" fill="#555" />
      </svg>
      <div className="mt-[5px] ml-[54px] h-[7px] w-[747px] rounded-full bg-[#4a4a4a]" />
      <svg width="6" height="9" viewBox="0 0 6 9" className="mt-[4px] ml-[368px]">
        <path d="M0 0V9L6 4.5Z" fill="#555" />
      </svg>
      <div className="mt-[2px] ml-[10px] text-[12px] leading-[14px] font-bold text-[#6a6a6a]">+</div>
      <div className="mt-[4px] ml-[3px] h-[9px] w-[2px] bg-[#6a6a6a]" />
      <div className="mt-[7px] ml-[6px] h-[2px] w-[8px] bg-[#6a6a6a]" />
    </div>
    <div className="flex h-[36px] items-center">
      <div className={`${pill} ml-[52px] w-[169px] text-[#d4d4d4]`}>
        <svg width="14" height="14" viewBox="0 0 14 14" className="ml-[9px]" fill="currentColor">
          <rect x="1" y="1" width="2.4" height="12" />
          <path d="M11 1V13L3.4 7Z" />
        </svg>
        <svg width="14" height="14" viewBox="0 0 14 14" className="ml-[20px]" fill="currentColor">
          <path d="M2 1V13L10 7Z" />
          <rect x="10" y="1" width="2.4" height="12" />
        </svg>
        <svg width="16" height="16" viewBox="0 0 16 16" className="ml-[19px]" fill="currentColor">
          <path d="M2 1V15L14 8Z" />
        </svg>
        <svg width="14" height="14" viewBox="0 0 14 14" className="ml-[18px]" fill="currentColor">
          <rect x="2" y="0.5" width="3.6" height="13" rx="0.5" />
          <rect x="8.4" y="0.5" width="3.6" height="13" rx="0.5" />
        </svg>
        <div className="ml-[20px] h-[13px] w-[13px] rounded-[3px] bg-[#d4d4d4]" />
      </div>
      <Divider ml="ml-[14px]" />
      <div className={`${pill} ml-[13px] w-[67px]`}>
        <div className="ml-[9px] h-[12px] w-[12px] rounded-full bg-[#e01e26]" />
        <div className="ml-[13px] flex h-[28px] w-[28px] items-center justify-center rounded-full bg-[#2f80ed]">
          <Repeat size={16} strokeWidth={2.8} className="text-[#e8e8e8]" />
        </div>
      </div>
      <Divider ml="ml-[14px]" />
      <div className={`${pill} ml-[13px] w-[103px]`}>
        <div className="ml-[13px]">
          <EnvIcon size={24} color="#a8a8a8" />
        </div>
        <div className="ml-[16px] text-[15px] text-[#8c8c8c]">Off</div>
      </div>
      <Divider ml="ml-[13px]" />
      <div className={`${pill} ml-[13px] w-[125px] text-[#8c8c8c]`}>
        <div className="ml-[12px] text-[16px]">128</div>
        <svg width="10" height="20" viewBox="0 0 10 20" className="ml-[8px]" fill="#9a9a9a">
          <ellipse cx="4" cy="16.5" rx="3.6" ry="2.8" />
          <rect x="6.4" y="1" width="1.3" height="15" />
        </svg>
        <div className="ml-[2px] text-[15px]">=</div>
        <div className="ml-[11px] text-[16px]">4/4</div>
      </div>
      <div className={`${pill} ml-[158px] w-[352px] flex-col !items-start px-[13px]`}>
        <div className="flex h-[16px] w-full items-center justify-between">
          <div className="text-[12.5px] font-bold text-[#b0b0b0]">94.2.50 / 2:55.078</div>
          <div className="pr-[1px] text-[9.5px] text-[#5a86b8]">[Stopped]</div>
        </div>
        <div className="flex h-[16px] items-center text-[14px] text-[#666]">
          <div className="w-[92px] pl-[4px]">Selection:</div>
          <div className="w-[70px]">8.1.00</div>
          <div className="w-[80px]">108.1.00</div>
          <div>100.0.00</div>
        </div>
      </div>
      <div className="ml-[308px] w-[90px] text-[15px] whitespace-pre text-[#8a8a8a]">Rate:  1.0</div>
      <div className="flex h-[18px] w-[113px] items-center rounded-full bg-[#1b1b1b] pl-[49px]">
        <div className="h-[14px] w-[14px] rounded-full bg-[#14a384]" />
      </div>
      <Divider ml="ml-[12px]" />
      <div className={`${pill} ml-[13px] w-[155px] text-[#d0d0d0]`}>
        <Search size={24} strokeWidth={2} className="ml-[14px]" />
        <Film size={22} strokeWidth={2} className="ml-[11px]" />
        <SlidersVertical size={22} strokeWidth={2.2} className="ml-[11px]" />
        <FaCog size={21} className="ml-[13px]" />
      </div>
    </div>
  </div>
);

/* master */
const fxNames = ["MaxxVolume SX", "OTT", "TDR SlickEQ M", "N-SPEC CLIP"];
const sideScale: [string, string, number][] = [
  ["12", "12", 585],
  ["6", "6", 621],
  ["0-", "-0", 657],
  ["6-", "-6", 693],
  ["12-", "-12", 730],
  ["18-", "-18", 766],
  ["24-", "-24", 802],
  ["30-", "-30", 838],
  ["36-", "-36", 874],
  ["42-", "-42", 910],
];
const midScale: [string, number, string][] = [
  ["-0-", 572, "text-[#cfcfcf]"],
  ["-6-", 609, "text-[#bdbdbd]"],
  ["-12-", 646, "text-[#b5b5b5]"],
  ["-18-", 682, "text-[#a8a8a8]"],
  ["-24-", 718, "text-[#9c9c9c]"],
  ["-30-", 754, "text-[#8e8e8e]"],
  ["-36-", 791, "text-[#828282]"],
  ["-42-", 826, "text-[#767676]"],
  ["-48-", 863, "text-[#6c6c6c]"],
  ["-54-", 899, "text-[#646464]"],
  ["-60-", 935, "text-[#5c5c5c]"],
];

const Master = () => (
  <div className="flex h-[948px] w-[84px] shrink-0 flex-col rounded-[6px] bg-[#3c3c3c] pl-[3px]">
    <div className="h-[345px] w-[78px] shrink-0 rounded-[4px] bg-[#323232] px-[1px]">
      <div className="flex h-[32px] items-center justify-end">
        <svg width="24" height="26" viewBox="0 0 24 26" fill="none" stroke="#8c8c8c" strokeWidth="3.4">
          <path d="M3 15C3 7 10 2 20 3" />
          <path d="M21 11C21 19 14 24 4 23" />
          <path d="M16 0L23 3L18 9Z" fill="#8c8c8c" stroke="none" />
          <path d="M8 26L1 23L6 17Z" fill="#8c8c8c" stroke="none" />
        </svg>
      </div>
      {fxNames.map((n) => (
        <div
          key={n}
          className={`mb-[3px] h-[13px] overflow-hidden rounded-[2px] pl-[4px] text-[11.5px] leading-[13px] tracking-[0.4px] whitespace-nowrap ${n.startsWith("TDR") ? "bg-[#7a3434] text-[#d8403c]" : "bg-[#272727] text-[#d0d0d0]"}`}
        >
          {n}
        </div>
      ))}
      <div className="mt-[1px] h-[14px] overflow-hidden bg-[#272727] pl-[4px] text-[11.5px] leading-[14px] tracking-[0.4px] whitespace-nowrap text-[#d0d0d0]">Loudness Meter</div>
      <div className="flex h-[104px] flex-col bg-black px-[9px] pt-[21px]">
        <div className="h-px bg-[#666]" />
        <div className="mt-[11px] h-px bg-[#666]" />
        <div className="mt-[10px] h-px bg-[#666]" />
        <div className="mt-[15px] h-px bg-[#666]" />
        <div className="mt-[6px] h-px bg-[#dcdcdc]" />
        <div className="mt-[2px] flex gap-[10px] text-[10.5px] leading-[14px] text-[#d8d8d8]">
          <span>LRA</span>
          <span>L-I</span>
        </div>
      </div>
      <div className="mt-[4px] h-[13px] rounded-[2px] bg-[#272727] pl-[4px] text-[11.5px] leading-[13px] tracking-[0.6px] text-[#bdbdbd]">TDR Prism</div>
    </div>
    <div className="mt-[5px] flex h-[24px] shrink-0 gap-[3px]">
      <div className="flex w-[24px] flex-col items-center justify-center gap-[1px] rounded-[3px] bg-[#242424]">
        <div className="h-[7px] w-[16px] rounded-[2px] bg-[#1ccba4]" />
        <div className="flex gap-[1px]">
          <div className="h-[7px] w-[7.5px] rounded-[2px] bg-[#555]" />
          <div className="h-[7px] w-[7.5px] rounded-[2px] bg-[#3399ff]" />
        </div>
      </div>
      <div className="flex w-[51px] items-center rounded-[3px] bg-[#242424]">
        <div className="ml-[2px] flex h-[20px] w-[21px] items-center justify-center rounded-[2px] bg-[#1ccba4] text-[14px] text-[#16423a]">FX</div>
        <Power size={12} className="ml-[9px] text-[#1ccba4]" />
      </div>
    </div>
    <div className="mt-[3px] flex h-[24px] shrink-0 gap-[3px]">
      <div className="flex w-[24px] items-center justify-center rounded-[3px] bg-[#242424]">
        <EnvIcon />
      </div>
      <div className="flex w-[51px] items-center rounded-[3px] bg-[#242424] text-[#bbb]">
        <svg width="18" height="12" viewBox="0 0 18 12" fill="none" stroke="#aaa" strokeWidth="1.2" className="ml-[5px]">
          <circle cx="6" cy="6" r="5" />
          <circle cx="12" cy="6" r="5" />
        </svg>
        <div className="ml-[6px] text-[13px]">St</div>
      </div>
    </div>
    <div className="mt-[2px] flex h-[36px] w-[78px] shrink-0 justify-between">
      <svg width="36" height="36" viewBox="0 0 36 36" className="overflow-visible">
        <circle cx="18" cy="18" r="17" fill="#1f1f1f" stroke="#303030" strokeWidth="2" />
        <rect x="15.5" y="1" width="5" height="11" rx="2" fill="#dcdcdc" />
      </svg>
      <svg width="36" height="36" viewBox="0 0 36 36" fill="none">
        <circle cx="18" cy="18" r="17" fill="#1f1f1f" stroke="#303030" strokeWidth="2" />
        <circle cx="18" cy="18" r="13.5" stroke="#cfcfcf" strokeWidth="3" strokeDasharray="66 19" transform="rotate(128 18 18)" />
      </svg>
    </div>
    <div className="mt-[4px] flex h-[424px] shrink-0 gap-[3px]">
      <div className="flex h-full w-[24px] flex-col items-center rounded-[3px] bg-[#212121] pt-[163px]">
        <div className="h-[24px] w-[20px] rounded-[4px] bg-[#15836a]" />
      </div>
      <div className="relative h-full w-[51px] overflow-hidden bg-[#252525] font-['Liberation_Sans'] text-[9.5px] leading-[12px] font-bold">
        <div className="absolute inset-y-0 left-[12px] w-px bg-[#333]" />
        <div className="absolute inset-y-0 left-[26px] w-px bg-[#333]" />
        <div className="absolute inset-y-0 left-[40px] w-px bg-[#333]" />
        <div className="absolute top-[98px] left-0 h-[24px] w-[11px] bg-[#007f4f]" />
        <div className="absolute top-[98px] right-0 h-[24px] w-[11px] bg-[#007f4f]" />
        <div className="absolute top-[13px] right-0 left-0 flex justify-between px-[4px] text-[9px] text-[#e8e8e8]">
          <span>-117</span>
          <span>-117</span>
        </div>
        {sideScale.map(([l, r, y]) => (
          <div key={y} className="absolute right-0 left-0 flex justify-between pl-[1px] text-[#c4c4c4]" style={{ top: y - 536 - 6 }}>
            <span>{l}</span>
            <span>{r}</span>
          </div>
        ))}
        {midScale.map(([t, y, cls]) => (
          <div key={t} className={`absolute right-0 left-0 text-center ${cls}`} style={{ top: y - 536 - 6 }}>
            {t}
          </div>
        ))}
        <div className="absolute right-0 bottom-0 left-0 flex h-[11px] justify-between bg-[#333] px-[6px] leading-[11px] text-[#e4e4e4]">
          <span>L-I</span>
          <span>-inf</span>
        </div>
      </div>
    </div>
    <div className="mt-[3px] flex h-[24px] w-[78px] shrink-0 justify-center gap-[3px] text-[15px] text-[#bdbdbd]">
      <div className="flex w-[24px] items-center justify-center rounded-[3px] bg-[#2a2a2a]">M</div>
      <div className="flex w-[24px] items-center justify-center rounded-[3px] bg-[#2a2a2a]">S</div>
    </div>
    <div className="mt-[2px] flex h-[24px] shrink-0 gap-[3px]">
      <div className="flex w-[24px] items-center justify-center rounded-[3px] bg-[#2a2a2a]">
        <svg width="18" height="8" viewBox="0 0 18 8" fill="#c4c4c4">
          <rect x="3" y="3" width="12" height="2" />
          <circle cx="3" cy="4" r="2.6" />
          <circle cx="15" cy="4" r="2.6" />
        </svg>
      </div>
      <div className="flex w-[24px] items-center justify-center rounded-[3px] bg-[#2a2a2a]">
        <svg width="18" height="18" viewBox="0 0 18 18" fill="#c4c4c4">
          <rect x="3" y="3" width="12" height="12" fill="none" stroke="#c4c4c4" />
          <circle cx="3" cy="3" r="2" />
          <circle cx="15" cy="3" r="2" />
          <circle cx="3" cy="15" r="2" />
          <circle cx="15" cy="15" r="2" />
        </svg>
      </div>
      <div className="flex w-[24px] items-center justify-center rounded-[3px] bg-[#2a2a2a]">
        <svg width="18" height="18" viewBox="0 0 18 18" fill="none" stroke="#c4c4c4" strokeWidth="1.4">
          <rect x="1.5" y="3" width="15" height="12" rx="3" strokeDasharray="3 1.5" />
          <circle cx="9" cy="9" r="3" />
        </svg>
      </div>
    </div>
    <div className="mt-[5px] flex h-[19px] w-[76px] shrink-0 items-center justify-center rounded-full bg-[#171717] text-[12px] text-[#b9cfe8]">MASTER</div>
  </div>
);

const ReaperLogo = () => (
  <svg width="17" height="18" viewBox="0 0 17 18" fill="none">
    <circle cx="8.5" cy="9" r="8" fill="#e8e8e8" />
    <path d="M8.5 1A8 8 0 0 0 2 14L6 8C7 5 8 3 8.5 1Z" fill="#2f9e4a" />
    <path d="M11 2A8 8 0 0 1 12 16C13 11 12 6 11 2Z" fill="#d8402e" />
    <path d="M3 15C5 12 6 9 8 7C8 11 7 14 7 17Z" fill="#e49a2c" />
  </svg>
);

const menus = ["File", "Edit", "View", "Insert", "Item", "Track", "Options", "Actions", "Extensions", "Help"];
const menuWidths = ["w-[32px]", "w-[34px]", "w-[39px]", "w-[43px]", "w-[38.5px]", "w-[40.5px]", "w-[56px]", "w-[54px]", "w-[70px]", "w-[46px]"];

export default function App() {
  return (
    <div className="flex h-[1050px] w-[1920px] flex-col overflow-hidden border-x-2 border-t-2 border-[#eaa91c] bg-[#2a2a2a] font-['Open_Sans',sans-serif]">
      <div className="flex h-[21px] shrink-0 items-center bg-[#d13438] text-[11.4px] text-white">
        <div className="ml-[1px] w-[19.5px]">
          <ReaperLogo />
        </div>
        <div>JTRD - Don't Stop [modified] - REAPER v7.34 - Licensed for personal/small business use</div>
        <div className="ml-auto flex w-[116px] items-center justify-between pr-[16px]">
          <div className="h-px w-[10px] bg-white" />
          <svg width="11" height="12" viewBox="0 0 11 12" fill="none" stroke="white">
            <rect x="0.5" y="2.5" width="8" height="9" />
            <path d="M2.5 2.5V0.5H10.5V9.5H8.5" />
          </svg>
          <svg width="11" height="11" viewBox="0 0 11 11" stroke="white" strokeWidth="1.2">
            <path d="M0.5 0.5L10.5 10.5M10.5 0.5L0.5 10.5" />
          </svg>
        </div>
      </div>
      <div className="flex h-[19px] shrink-0 items-center border-b border-[#e6e6e6] bg-white pl-[5px] text-[11.4px] text-black">
        {menus.map((m, i) => (
          <div key={m} className={menuWidths[i]}>
            {m}
          </div>
        ))}
        <div>[Show/hide all track envelopes]</div>
        <div className="ml-auto pr-[4px]">[44.1kHz 16bit FLAC : 2/4ch 1024spls ~24/26ms ASIO]</div>
      </div>
      <div className="flex h-[17px] shrink-0 items-end bg-[#3a3a3a]">
        <div className="w-[13px] pb-[1px] pl-[3px] text-[13px] leading-[14px] font-bold text-[#ddd]">+</div>
        <div className="flex h-[15px] w-[132px] items-center rounded-t-[2px] bg-[#5c5c5c] pl-[4px] text-[11.5px] leading-none text-[#0c0c0c]">*JTRD - Don't Stop.RPP</div>
        <div className="ml-auto flex h-[17px] w-[84px] items-center bg-[#2e2e2e] pl-[3px]">
          <div className="flex h-[13px] w-[66px] items-center justify-center bg-[#18c39c] text-[10px] whitespace-nowrap text-[#14463c]">MONITOR FX</div>
          <Power size={12} className="ml-[3px] text-[#18c39c]" />
        </div>
      </div>
      <TopToolbar />
      <div className="flex min-h-0 flex-1">
        <div className="flex w-[1821px] shrink-0 flex-col">
          <div className="flex h-[892px] shrink-0">
            <Tcp />
            <Arrange />
            <VScroll />
          </div>
          <BottomBar />
        </div>
        <Master />
        <div className="h-full w-[11px] shrink-0 bg-[#a8a8a8]" />
      </div>
    </div>
  );
}
